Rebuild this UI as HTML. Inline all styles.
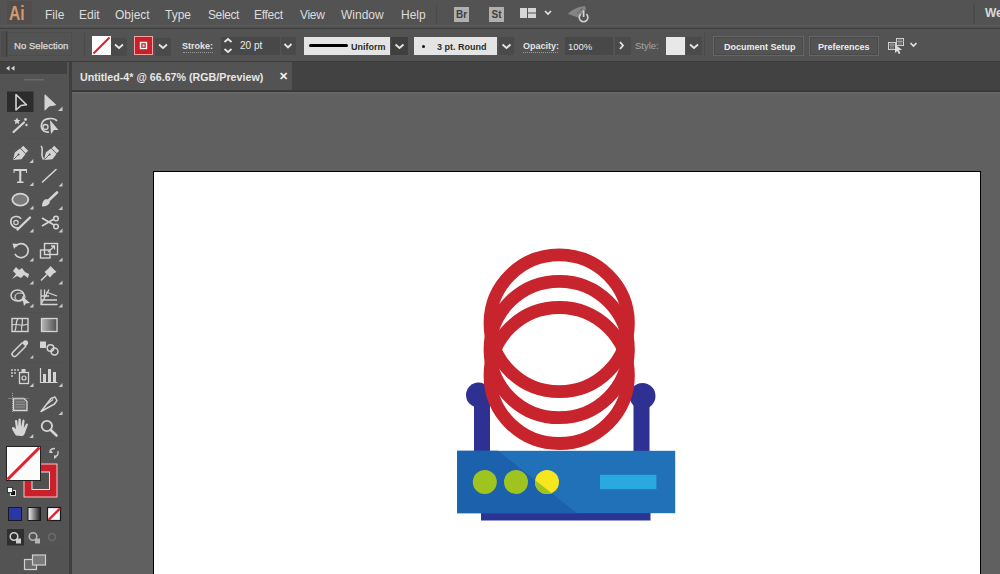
<!DOCTYPE html>
<html><head><meta charset="utf-8">
<style>
*{margin:0;padding:0;box-sizing:border-box}
html,body{width:1000px;height:574px;overflow:hidden;background:#606060;font-family:"Liberation Sans",sans-serif}
.a{position:absolute}
.t{position:absolute;white-space:nowrap;line-height:1}
#menu{left:0;top:0;width:1000px;height:25px;background:#535353}
.mi{color:#dcdcdc;font-size:12px;top:9px}
#ctrl{left:0;top:29px;width:1000px;height:32px;background:#535353}
.cb{font-size:9px;font-weight:bold;color:#e8e8e8}
.box{position:absolute;background:#454545}
.lbox{position:absolute;background:#e4e4e4}
</style></head><body>
<!-- menu bar -->
<div class="a" id="menu"></div>
<div class="a" style="left:0;top:25px;width:1000px;height:1px;background:#5c5c5c"></div>
<div class="a" style="left:0;top:26px;width:1000px;height:2px;background:#535353"></div>
<div class="a" style="left:0;top:28px;width:1000px;height:1px;background:#3c3c3c"></div>
<div class="a" style="left:7px;top:1px;width:25px;height:23px;background:#524d4a"></div><div class="t" style="left:8.5px;top:2px;font-size:21px;color:#d09a74;font-weight:bold;transform:scaleX(0.74);transform-origin:0 0">Ai</div>
<div class="t mi" style="left:45px">File</div>
<div class="t mi" style="left:79px">Edit</div>
<div class="t mi" style="left:115px">Object</div>
<div class="t mi" style="left:165px">Type</div>
<div class="t mi" style="left:208px;letter-spacing:-0.4px">Select</div>
<div class="t mi" style="left:254px;letter-spacing:-0.3px">Effect</div>
<div class="t mi" style="left:300px;letter-spacing:-0.3px">View</div>
<div class="t mi" style="left:341px">Window</div>
<div class="t mi" style="left:401px">Help</div>


<div class="a" style="left:436px;top:4px;width:1px;height:20px;background:#4a4a4a"></div>
<div class="a" style="left:454px;top:7px;width:15px;height:15px;background:#b0b0b0"></div>
<div class="t" style="left:456px;top:10px;font-size:10px;font-weight:bold;color:#3e3e3e">Br</div>
<div class="a" style="left:489px;top:7px;width:15px;height:15px;background:#b0b0b0"></div>
<div class="t" style="left:491.5px;top:10px;font-size:10px;font-weight:bold;color:#3e3e3e">St</div>
<svg class="a" style="left:515px;top:0" width="90" height="26">
 <rect x="5" y="8" width="7" height="10" fill="#d6d6d6"/>
 <rect x="13" y="8" width="8" height="4.5" fill="#d6d6d6"/>
 <rect x="13" y="13.5" width="8" height="4.5" fill="#d6d6d6"/>
 <polyline points="30,11 33,14 36,11" fill="none" stroke="#e6e6e6" stroke-width="1.6"/>
 <path d="M53,14 C56,10 62,7 70,6 L71,9 C68,12 66,15 64,18 C60,16 56,15 53,14 Z" fill="#858585"/>
 <path d="M65,11 L68,8 M62,14 L66,9" stroke="#6a6a6a" stroke-width="1"/>
 <path d="M65.8,14.2 A4.3,4.3 0 1 0 71.4,14.2" fill="none" stroke="#d0d0d0" stroke-width="1.6"/>
 <line x1="68.6" y1="10.5" x2="68.6" y2="17" stroke="#d8d8d8" stroke-width="1.7"/>
</svg>
<div class="a" style="left:973px;top:4px;width:2px;height:20px;background:#4b4b4b"></div>
<div class="t" style="left:985px;top:7px;font-size:12px;font-weight:bold;color:#d8d8d8">We</div>

<!-- control bar -->
<div class="a" id="ctrl"></div>
<div class="a" style="left:0;top:61px;width:1000px;height:1px;background:#3c3c3c"></div>


<!-- control bar items -->
<div class="a" style="left:1px;top:31px;width:5px;height:26px;background:#4c4c4c"></div>
<div class="a" style="left:6px;top:31px;width:1px;height:26px;background:#3f3f3f"></div>
<div class="a" style="left:84px;top:33px;width:1px;height:24px;background:#4a4a4a"></div>
<div class="a" style="left:7px;top:32px;width:65px;height:24px;border:1px solid #4d4d4d;border-left-color:#474747"></div><div class="t" style="left:14px;top:41px;font-size:9.6px;color:#dadada;-webkit-text-stroke:0.25px #dadada">No Selection</div>
<!-- fill swatch -->
<svg class="a" style="left:92px;top:36px" width="19" height="19"><rect width="19" height="19" fill="#fbfbfb"/><line x1="1.5" y1="17.5" x2="17.5" y2="1.5" stroke="#d8202a" stroke-width="2"/></svg>
<div class="box" style="left:111px;top:38px;width:16px;height:18px;background:#4a4a4a"></div>
<div class="box" style="left:155px;top:38px;width:16px;height:18px;background:#4a4a4a"></div>
<!-- stroke swatch -->
<svg class="a" style="left:134px;top:36px" width="19" height="19"><rect x="0.5" y="0.5" width="18" height="18" fill="#c9202b" stroke="#f0a0a0" stroke-width="1"/><rect x="6.5" y="6.5" width="6" height="6" fill="#c9202b" stroke="#ffffff" stroke-width="1.4"/><rect x="8.5" y="8.5" width="2" height="2" fill="#f0f0f0"/></svg>
<div class="t cb" style="left:182px;top:42px;color:#e4e4e4">Stroke:</div>
<div class="a" style="left:183px;top:52px;width:30px;height:0;border-top:1px dotted #9a9a9a"></div>
<div class="box" style="left:221px;top:37px;width:59px;height:18px;background:#484848"></div>
<div class="box" style="left:281px;top:37px;width:15px;height:18px;background:#4a4a4a"></div>
<div class="t" style="left:240px;top:41px;font-size:10px;color:#ececec">20 pt</div>
<!-- uniform -->
<div class="lbox" style="left:304px;top:37px;width:86px;height:18px"></div>
<div class="a" style="left:309px;top:44px;width:39px;height:3px;background:#000;border-radius:1.5px"></div>
<div class="t cb" style="left:351px;top:43px;color:#2c2c2c">Uniform</div>
<div class="box" style="left:391px;top:37px;width:17px;height:18px;background:#3f3f3f"></div>
<!-- round -->
<div class="lbox" style="left:414px;top:37px;width:83px;height:18px"></div>
<div class="a" style="left:422px;top:45px;width:3px;height:3px;background:#111;border-radius:50%"></div>
<div class="t cb" style="left:437px;top:43px;color:#2c2c2c">3 pt. Round</div>
<div class="box" style="left:499px;top:37px;width:15px;height:18px;background:#4a4a4a"></div>
<div class="t cb" style="left:523px;top:42px;color:#e4e4e4">Opacity:</div>
<div class="a" style="left:523px;top:52px;width:35px;height:0;border-top:1px dotted #9a9a9a"></div>
<div class="box" style="left:565px;top:37px;width:48px;height:18px;background:#484848"></div>
<div class="t" style="left:568px;top:42px;font-size:9.5px;color:#ececec">100%</div>
<div class="box" style="left:615px;top:37px;width:16px;height:18px;background:#4a4a4a"></div>
<div class="t cb" style="left:635px;top:41px;color:#a8a8a8;font-weight:normal;font-size:9.5px">Style:</div>
<div class="lbox" style="left:666px;top:37px;width:19px;height:18px;background:#e8e8e8"></div>
<div class="box" style="left:686px;top:37px;width:16px;height:18px;background:#4a4a4a"></div>
<div class="a" style="left:704px;top:33px;width:1px;height:24px;background:#4a4a4a"></div>
<div class="a" style="left:713px;top:36px;width:91px;height:20px;border:1px solid #656565;box-shadow:inset 0 0 0 1px #4a4a4a"></div>
<div class="t cb" style="left:724px;top:43px;color:#ececec">Document Setup</div>
<div class="a" style="left:809px;top:36px;width:70px;height:20px;border:1px solid #656565;box-shadow:inset 0 0 0 1px #4a4a4a"></div>
<div class="t cb" style="left:818px;top:43px;color:#ececec">Preferences</div>
<svg class="a" style="left:0;top:0" width="1000" height="62">
 <g fill="none" stroke="#e6e6e6" stroke-width="1.8">
  <polyline points="115,44.5 119,48 123,44.5"/>
  <polyline points="159,44.5 163,48 167,44.5"/>
  <polyline points="224.5,42 228,39 231.5,42"/>
  <polyline points="224.5,49 228,52 231.5,49"/>
  <polyline points="284.5,44 288,47.5 291.5,44"/>
  <polyline points="395.5,44.5 399.5,48 403.5,44.5"/>
  <polyline points="502.5,44.5 506.5,48 510.5,44.5"/>
  <polyline points="620,42 623,45.5 620,49"/>
  <polyline points="690,44.5 694,48 698,44.5"/>
  <polyline points="910.5,43 913.5,46 916.5,43" stroke-width="1.6"/>
 </g>
 <!-- artboard-select icon -->
 <g fill="none" stroke="#d4d4d4" stroke-width="1">
  <rect x="888.5" y="42.5" width="7" height="7"/>
  <path d="M891,42.5 V49.5 M893,42.5 V49.5 M888.5,45 H895.5" stroke="#9a9a9a"/>
  <rect x="896.5" y="38.5" width="7" height="7"/>
  <path d="M899,38.5 V45.5 M901,38.5 V45.5 M896.5,41.5 H903.5" stroke="#9a9a9a"/>
 </g>
 <polygon points="895,44.5 895,53 897.2,51 898.8,54 900.4,53.2 898.9,50.2 902,49.8" fill="#dcdcdc"/>
</svg>

<!-- tool panel -->
<div class="a" style="left:0;top:62px;width:69px;height:512px;background:#535353"></div>
<div class="a" style="left:0;top:62px;width:67px;height:12px;background:#414141"></div>
<div class="a" style="left:69px;top:62px;width:3px;height:512px;background:#3e3e3e"></div>


<!-- tool icons -->
<svg class="a" style="left:0;top:0" width="72" height="574" viewBox="0 0 72 574">
 <defs>
  <linearGradient id="gg" x1="0" x2="1" y1="0" y2="0"><stop offset="0" stop-color="#f2f2f2"/><stop offset="1" stop-color="#1a1a1a"/></linearGradient>
  <linearGradient id="gt" x1="0" x2="1" y1="0" y2="0"><stop offset="0" stop-color="#b8b8b8"/><stop offset="1" stop-color="#505050"/></linearGradient>
 </defs>
 <!-- header chevrons -->
 <path d="M6,68.3 L9.5,65.8 L9.5,70.8 Z M11,68.3 L14.5,65.8 L14.5,70.8 Z" fill="#d8d8d8"/>
 <rect x="24" y="79" width="20" height="1.5" fill="#6a6a6a"/>
 <!-- separators -->
 <rect x="6" y="138" width="58" height="1" fill="#505050"/>
 <rect x="6" y="236" width="58" height="1" fill="#505050"/>
 <rect x="6" y="312" width="58" height="1" fill="#505050"/>
 <rect x="6" y="362" width="58" height="1" fill="#505050"/>
 <rect x="6" y="440" width="58" height="1" fill="#505050"/>
 <rect x="6" y="524" width="58" height="1" fill="#505050"/>
 <rect x="6" y="548" width="58" height="1" fill="#505050"/>
 <!-- selected tool bg -->
 <rect x="7" y="91.5" width="26.5" height="20.5" fill="#2c2c2c"/>
 <g fill="#d4d4d4" stroke="#d4d4d4">
  <!-- selection outline -->
  <path d="M16,94.5 L26.5,104.8 L21,105.5 L16,110 Z" fill="none" stroke-width="1.6" stroke-linejoin="round"/>
  <!-- direct selection -->
  <path d="M45,94.8 L55.7,104.8 L49,106 L45,110.2 Z" stroke-width="1" stroke-linejoin="round"/>
  <!-- magic wand -->
  <line x1="13.5" y1="132" x2="24" y2="122.5" stroke-width="2.2" stroke-linecap="round"/>
  <path d="M17,117.5 l1,2.3 2.4,0.4 -1.8,1.6 0.5,2.4 -2.1,-1.2 -2.1,1.2 0.5,-2.4 -1.8,-1.6 2.4,-0.4z" stroke="none"/>
  <circle cx="25.5" cy="119.5" r="1.4" stroke="none"/>
  <circle cx="26.5" cy="125" r="1.2" stroke="none"/>
  <!-- lasso -->
  <path d="M49,132 C43,133 40,128 42,123 C44,118 54,117 57,121" fill="none" stroke-width="1.6"/>
  <circle cx="45.5" cy="127" r="2.5" fill="none" stroke-width="1.3"/>
  <path d="M50,120 L58.5,130 L54,130 L51,134 Z" stroke="none"/>
  <!-- pen -->
  <path d="M13,160 L14.8,152.5 L20,148.5 L25.5,154 L21.5,159.2 Z" stroke="none"/>
  <rect x="21" y="147.8" width="7" height="3.5" transform="rotate(45 24.5 149.5)" stroke="none"/>
  <path d="M13.5,159.5 L18,155" stroke="#535353" stroke-width="0.9"/>
  <circle cx="18.6" cy="154.4" r="1" fill="#535353" stroke="none"/>
  <!-- curvature pen -->
  <path d="M44,160 L45.8,152.5 L51,148.5 L56.5,154 L52.5,159.2 Z" stroke="none"/>
  <rect x="52" y="147.8" width="7" height="3.5" transform="rotate(45 55.5 149.5)" stroke="none"/>
  <path d="M44.5,159.5 L49,155" stroke="#535353" stroke-width="0.9"/>
  <circle cx="49.6" cy="154.4" r="1" fill="#535353" stroke="none"/>
  <path d="M41,146 C44.5,149 39.5,154 43.5,159.5" fill="none" stroke-width="1.5"/>
  <!-- T -->
  <path d="M13.5,169 H27 V173 H26 V171 H21.3 V181.5 H23.5 V183 H17 V181.5 H19.2 V171 H14.5 V173 H13.5 Z" stroke="none"/>
  <!-- line -->
  <line x1="42.5" y1="182" x2="56" y2="169.5" stroke-width="1.6" stroke-linecap="round"/>
  <!-- ellipse -->
  <ellipse cx="20.3" cy="199.6" rx="8" ry="6" fill="#7a7a7a" stroke-width="1.8"/>
  <!-- paintbrush -->
  <line x1="48" y1="201" x2="57" y2="192.5" stroke-width="2.6" stroke-linecap="round"/>
  <path d="M42,206.5 C42,202 44,199 47,199 L50,202 C49,205 46,206.5 42,206.5Z" stroke="none"/>
  <!-- shaper -->
  <path d="M20,228 C13,229 10,224 11,220 C12,216 19,215 21,219" fill="none" stroke-width="1.6"/>
  <circle cx="16" cy="222.5" r="2.2" fill="none" stroke-width="1.2"/>
  <line x1="17.5" y1="229.5" x2="30" y2="217.5" stroke-width="2.4" stroke-linecap="round"/>
  <!-- scissors -->
  <line x1="42" y1="218" x2="54" y2="225" stroke-width="1.8"/>
  <line x1="42" y1="226" x2="54" y2="219" stroke-width="1.8"/>
  <circle cx="56" cy="218.5" r="2.3" fill="none" stroke-width="1.5"/>
  <circle cx="56" cy="226.5" r="2.3" fill="none" stroke-width="1.5"/>
  <!-- rotate -->
  <path d="M15.5,246.5 A7,7 0 1 1 15,254" fill="none" stroke-width="1.6"/>
  <path d="M12.5,243.5 L18,244 L14,249 Z" stroke="none"/>
  <!-- scale -->
  <rect x="44.5" y="243.5" width="13" height="11" fill="none" stroke-width="1.4"/>
  <rect x="40.5" y="250" width="9.5" height="8" fill="none" stroke-width="1.4"/>
  <path d="M48,252 L54,246.5 M51,246 H54.5 V249.5" fill="none" stroke-width="1.3"/>
  <!-- warp -->
  <path d="M12,279 L16,274 L13,271 L16,267 L19,270 L22,268 L25,272 L29,274 L28,278 L24,275 L21,278 L17,276 Z" stroke="none"/>
  <!-- puppet pin -->
  <path d="M50.5,266 L56.5,272 L53.5,273.5 L50,277.5 L44.5,272 L48.5,268.5 Z" stroke="none"/>
  <line x1="41" y1="280.5" x2="47" y2="274.5" stroke-width="1.6"/>
  <!-- shape builder -->
  <ellipse cx="17.5" cy="295.5" rx="6.5" ry="5.5" fill="none" stroke-width="1.5"/>
  <ellipse cx="20" cy="297" rx="5" ry="4" fill="none" stroke-width="1.2"/>
  <path d="M22,296 L30,303 L26,303.5 L24,306 Z" stroke="none"/>
  <!-- perspective grid -->
  <path d="M41,289.5 V304.5 H57.5 M41,304.5 L49,289.5 M44.5,289.5 V298 M41,296 H49 M41,300 H57 M46,292 L57,296" fill="none" stroke-width="1.3"/>
  <!-- mesh -->
  <rect x="12" y="318.5" width="16" height="13" fill="none" stroke-width="1.4"/>
  <path d="M15,331 C17,326 15,322 18,318.5 M22,331 C20,327 24,323 22,318.5 M12,325 C16,323 22,327 28,324" fill="none" stroke-width="1.2"/>
  <!-- gradient -->
  <rect x="41.5" y="318.5" width="15.5" height="13" fill="url(#gt)" stroke-width="1.3"/>
  <!-- eyedropper -->
  <rect x="10" y="346.5" width="17" height="5" rx="2.5" transform="rotate(-45 19.5 349)" fill="none" stroke-width="1.5"/>
  <circle cx="25.5" cy="342.8" r="2.6" stroke="none"/>
  <!-- blend -->
  <rect x="40" y="341.5" width="6" height="6.5" stroke="none"/>
  <circle cx="50.5" cy="348" r="3.3" fill="none" stroke-width="1.5"/>
  <circle cx="54.5" cy="351.5" r="3.5" fill="none" stroke-width="1.5"/>
  <!-- symbol sprayer -->
  <g stroke="none"><circle cx="12" cy="370" r="0.9"/><circle cx="15" cy="370" r="0.9"/><circle cx="18" cy="370" r="0.9"/><circle cx="12" cy="373" r="0.9"/><circle cx="15" cy="373" r="0.9"/><circle cx="12" cy="376" r="0.9"/></g>
  <rect x="19.5" y="372.5" width="9" height="11" fill="none" stroke-width="1.3"/>
  <circle cx="24" cy="378" r="2" fill="none" stroke-width="1.2"/>
  <rect x="21.5" y="369" width="4" height="3" stroke="none"/>
  <!-- graph -->
  <path d="M40.5,368 V382.5 H57.5" fill="none" stroke-width="1.2"/>
  <rect x="43" y="374" width="3" height="8" stroke="none"/>
  <rect x="48" y="369" width="3" height="13" stroke="none"/>
  <rect x="53" y="372" width="3" height="10" stroke="none"/>
  <!-- artboard -->
  <path d="M13.5,398.5 H24 L27,401.5 V410.5 H13.5 Z" fill="#6a6a6a" stroke-width="1.3"/>
  <path d="M15.5,402 H25 M15.5,404.5 H25 M15.5,407 H25" fill="none" stroke-width="0.8" stroke="#9a9a9a"/>
  <path d="M12.5,393 V412 M8.5,398.5 H29" fill="none" stroke-width="1" stroke-dasharray="1,1" stroke="#a8a8a8"/>
  <!-- knife/slice -->
  <path d="M41,411.5 L51,398.5 L55,397 L57,400.5 L54.5,404 Z" fill="none" stroke-width="1.5" stroke-linejoin="round"/>
  <path d="M47,404 L53,399.5" fill="none" stroke-width="1.2"/>
  <!-- hand -->
  <path d="M16,435.5 C13,431 11,428 12.5,427 C14,426.5 15,428 16,429 L15,421 C15,419.5 17,419.5 17.3,421 L18,427 L18.5,419.5 C18.7,418 20.7,418 20.8,419.5 L21,427 L22.5,420.5 C22.8,419 24.6,419.3 24.5,421 L23.8,428 L26,424 C26.7,423 28.3,423.5 27.8,425 L25,433 C24,435.5 23,436 21,436 Z" stroke="none"/>
  <!-- zoom -->
  <circle cx="46.9" cy="426" r="5.2" fill="none" stroke-width="1.8"/>
  <line x1="50.5" y1="429.8" x2="56.5" y2="435.5" stroke-width="2.6" stroke-linecap="round"/>
 </g>
 <!-- corner triangles -->
 <g fill="#c9c9c9">
  <path d="M62.5,106.5 V111 H58Z"/>
  <path d="M33.3,159 V163 H29.3Z"/>
  <path d="M33.5,182 V186 H29.5Z"/><path d="M62.5,182.5 V186.5 H58.5Z"/>
  <path d="M33.5,205.5 V209.5 H29.5Z"/><path d="M62.5,206 V210 H58.5Z"/>
  <path d="M33.5,228.5 V232.5 H29.5Z"/><path d="M62.5,228.5 V232.5 H58.5Z"/>
  <path d="M33.5,257.5 V261.5 H29.5Z"/><path d="M62.5,257.5 V261.5 H58.5Z"/>
  <path d="M33.5,280.5 V284.5 H29.5Z"/><path d="M62.5,280.5 V284.5 H58.5Z"/>
  <path d="M33.5,303.5 V307.5 H29.5Z"/><path d="M62.5,303.5 V307.5 H58.5Z"/>
  <path d="M33.3,355 V358.5 H29.8Z"/>
  <path d="M33.5,383 V387 H29.5Z"/><path d="M62.5,383 V387 H58.5Z"/>
  <path d="M62.5,411 V415 H58.5Z"/>
  <path d="M33.3,434 V438 H29.3Z"/>
 </g>
 <!-- fill / stroke swatches -->
 <rect x="24" y="464" width="33" height="33" fill="#c9202b" stroke="#f0c8c8" stroke-width="1"/>
 <rect x="32" y="472" width="17.5" height="17.5" fill="#505050" stroke="#f0e0e0" stroke-width="1"/>
 <rect x="6.5" y="446.5" width="34" height="34" fill="#fdfdfd" stroke="#222" stroke-width="1"/>
 <line x1="7.5" y1="479.5" x2="39.5" y2="447.5" stroke="#e3202a" stroke-width="3"/>
 <!-- swap arrows -->
 <path d="M50,452 C50,449 52,448.5 55,448.5 M58,451 C58.5,454 58,456 55,456.5" fill="none" stroke="#d0d0d0" stroke-width="1.3"/>
 <path d="M49,453 L51,450 L53,453Z M54,455 L57,457 L54,459Z" fill="#d0d0d0"/>
 <!-- default fill/stroke mini -->
 <rect x="10.5" y="490.5" width="5" height="5" fill="#111" stroke="#ddd" stroke-width="1"/>
 <rect x="7.5" y="487.5" width="5" height="5" fill="#fff" stroke="#222" stroke-width="0.8"/>
 <!-- color / gradient / none -->
 <rect x="8.5" y="507.5" width="13" height="13" fill="#2b37a3" stroke="#1a1a1a" stroke-width="1"/>
 <rect x="28" y="507.5" width="12.5" height="13" fill="url(#gg)" stroke="#1a1a1a" stroke-width="1"/>
 <rect x="47.5" y="507.5" width="13" height="13" fill="#fafafa" stroke="#1a1a1a" stroke-width="1.2"/>
 <line x1="48.5" y1="520" x2="60" y2="508.5" stroke="#e0202a" stroke-width="2.4"/>
 <!-- draw modes -->
 <rect x="7" y="529" width="17" height="16.5" fill="#2f2f2f"/>
 <g fill="none" stroke="#cfcfcf" stroke-width="1.6">
  <circle cx="14" cy="536.5" r="3.8"/>
  <circle cx="33" cy="536.5" r="3.8" stroke="#b5b5b5"/>
  <circle cx="52" cy="537" r="3.5" stroke="#6a6a6a"/>
 </g>
 <rect x="16" y="538.5" width="5" height="5" fill="#cfcfcf"/>
 <rect x="35" y="538.5" width="5" height="5" fill="#b5b5b5"/>
 <!-- screen mode -->
 <rect x="24.5" y="559.5" width="12" height="10" fill="#6a6a6a" stroke="#d0d0d0" stroke-width="1.2"/>
 <rect x="32.5" y="555" width="13" height="10" fill="#7a7a7a" stroke="#d0d0d0" stroke-width="1.2"/>
</svg>

<!-- tab bar -->
<div class="a" style="left:72px;top:62px;width:928px;height:28px;background:#424242"></div>
<div class="a" style="left:72px;top:62px;width:220px;height:28px;background:#535353"></div>
<div class="a" style="left:72px;top:90px;width:928px;height:1.5px;background:#3a3a3a"></div><div class="a" style="left:72px;top:92px;width:928px;height:2px;background:#666"></div>
<div class="t" style="left:80px;top:72px;font-size:10.7px;font-weight:bold;color:#e6e6e6">Untitled-4* @ 66.67% (RGB/Preview)</div>
<div class="t" style="left:279px;top:71px;font-size:11px;font-weight:bold;color:#f0f0f0">&#x2715;</div>

<!-- artboard -->
<div class="a" style="left:153px;top:171px;width:828px;height:420px;background:#fff;border:1px solid #000"></div>

<!-- graphic -->
<svg class="a" style="left:0;top:0" width="1000" height="574" viewBox="0 0 1000 574">
  <!-- antennas -->
  <rect x="474" y="395" width="16" height="60" fill="#2e3192"/>
  <circle cx="478.5" cy="395" r="12.5" fill="#2e3192"/>
  <rect x="633.5" y="395" width="16" height="60" fill="#2e3192"/>
  <circle cx="642.5" cy="396" r="13" fill="#2e3192"/>
  <!-- rings -->
  <g fill="none" stroke="#c8242d" stroke-width="12.8">
    <ellipse cx="559.2" cy="323.3" rx="69.2" ry="68.4"/>
    <ellipse cx="559.2" cy="349.5" rx="69.2" ry="68.2"/>
    <ellipse cx="559.2" cy="375.5" rx="69.2" ry="68"/>
  </g>
  <!-- base -->
  <rect x="481" y="505" width="169.5" height="15.5" fill="#2b3494"/>
  <!-- box -->
  <rect x="457.2" y="450.8" width="218" height="62.4" fill="#2171b8"/>
  <polygon points="457.2,450.8 498,450.8 577,513.2 457.2,513.2" fill="#1c61ab"/>
  <circle cx="484.8" cy="482" r="12" fill="#9fc420"/>
  <circle cx="516" cy="482" r="12" fill="#9fc420"/>
  <circle cx="547" cy="482" r="12" fill="#f7e51d"/>
  <clipPath id="shd"><polygon points="457.2,450.8 498,450.8 577,513.2 457.2,513.2"/></clipPath>
  <circle cx="547" cy="482" r="12" fill="#9fc420" clip-path="url(#shd)"/>
  <rect x="600" y="474.8" width="56.4" height="14.4" fill="#2aa8e0"/>
</svg>
</body></html>
